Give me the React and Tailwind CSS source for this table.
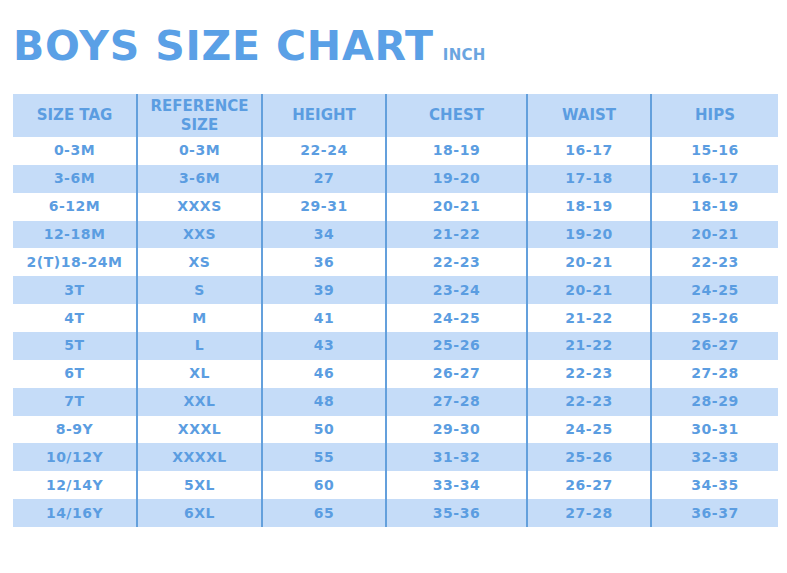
import React from 'react';

const rows = [
  ['0-3M', '0-3M', '22-24', '18-19', '16-17', '15-16'],
  ['3-6M', '3-6M', '27', '19-20', '17-18', '16-17'],
  ['6-12M', 'XXXS', '29-31', '20-21', '18-19', '18-19'],
  ['12-18M', 'XXS', '34', '21-22', '19-20', '20-21'],
  ['2(T)18-24M', 'XS', '36', '22-23', '20-21', '22-23'],
  ['3T', 'S', '39', '23-24', '20-21', '24-25'],
  ['4T', 'M', '41', '24-25', '21-22', '25-26'],
  ['5T', 'L', '43', '25-26', '21-22', '26-27'],
  ['6T', 'XL', '46', '26-27', '22-23', '27-28'],
  ['7T', 'XXL', '48', '27-28', '22-23', '28-29'],
  ['8-9Y', 'XXXL', '50', '29-30', '24-25', '30-31'],
  ['10/12Y', 'XXXXL', '55', '31-32', '25-26', '32-33'],
  ['12/14Y', '5XL', '60', '33-34', '26-27', '34-35'],
  ['14/16Y', '6XL', '65', '35-36', '27-28', '36-37'],
];

const headers = ['SIZE TAG', 'REFERENCE\nSIZE', 'HEIGHT', 'CHEST', 'WAIST', 'HIPS'];

const cols = 'grid grid-cols-[123px_125px_124px_141px_124px_128px]';

const Cell = ({ i, children, className = '' }) => (
  <div
    className={`flex items-center justify-center text-center ${
      i > 0 ? 'border-l-2 border-[#64a0dc]' : ''
    } ${className}`}
  >
    {children}
  </div>
);

export default function App() {
  return (
    <div
      className="w-[787px] h-[573px] bg-white text-[#5b9de1] overflow-hidden"
      style={{ fontFamily: '"DejaVu Sans", Verdana, sans-serif' }}
    >
      {/* Title */}
      <div className="pt-[26px] pl-[13px] flex items-baseline">
        <span className="text-[41px] leading-[41px] font-bold tracking-[0.8px] text-[#5aa0e6]">
          BOYS SIZE CHART
        </span>
        <span className="ml-[9px] text-[15px] font-bold tracking-[0.3px] text-[#6aa5e0]">INCH</span>
      </div>

      {/* Table */}
      <div className="mt-[27px] ml-[13px] w-[765px] font-bold">
        <div className={`${cols} h-[43px] bg-[#c5dcf8]`}>
          {headers.map((h, i) => (
            <Cell key={h} i={i} className="text-[15px] leading-[19px] whitespace-pre-line">
              {h}
            </Cell>
          ))}
        </div>
        {rows.map((r, ri) => (
          <div
            key={ri}
            className={`${cols} h-[27.86px] ${ri % 2 === 1 ? 'bg-[#c5dcf8]' : 'bg-white'}`}
          >
            {r.map((c, i) => (
              <Cell key={i} i={i} className="text-[14px] tracking-[0.5px]">
                {c}
              </Cell>
            ))}
          </div>
        ))}
      </div>
    </div>
  );
}
